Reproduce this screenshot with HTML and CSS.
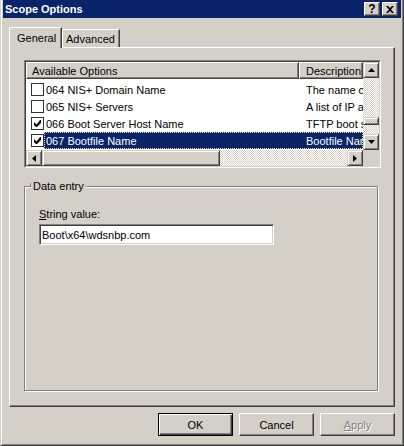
FILE: index.html
```html
<!DOCTYPE html>
<html lang="en">
<head>
    <meta charset="UTF-8">
    <title>Scope Options</title>
    <link rel="stylesheet" href="styles.css">
</head>
<body>

<div class="window">
    <div class="titlebar">
        <span class="title">Scope Options</span>
        <span class="cap-btn help">?</span>
        <span class="cap-btn">
            <svg width="8" height="7" viewBox="0 0 8 7"><path d="M0 0h2l2 2 2-2h2L5 3.5 8 7H6L4 5 2 7H0l3-3.5z" fill="#000"/></svg>
        </span>
    </div>

    <div class="dialog">
        <div class="tabs">
            <div class="tab active">General</div>
            <div class="tab">Advanced</div>
        </div>

        <div class="panel">
            <!-- lista de opções -->
            <div class="listview">
                <div class="lv-inner">
                    <div class="lv-main">
                        <div class="lv-head">
                            <div class="hcell name">Available Options</div>
                            <div class="hcell desc">Description</div>
                        </div>
                        <div class="lv-rows">
                            <div class="row">
                                <span class="cb"></span>
                                <div class="item"><span class="nm">064 NIS+ Domain Name</span><span class="ds">The name of the NIS+ domain</span></div>
                            </div>
                            <div class="row">
                                <span class="cb"></span>
                                <div class="item"><span class="nm">065 NIS+ Servers</span><span class="ds">A list of IP addresses</span></div>
                            </div>
                            <div class="row">
                                <span class="cb checked"><svg width="7" height="7" viewBox="0 0 7 7"><path d="M6 0h1v3L3 7H2L0 5V2l2.5 2.5z" fill="#000"/></svg></span>
                                <div class="item"><span class="nm">066 Boot Server Host Name</span><span class="ds">TFTP boot server host name</span></div>
                            </div>
                            <div class="row sel">
                                <span class="cb checked"><svg width="7" height="7" viewBox="0 0 7 7"><path d="M6 0h1v3L3 7H2L0 5V2l2.5 2.5z" fill="#000"/></svg></span>
                                <div class="item"><span class="nm">067 Bootfile Name</span><span class="ds">Bootfile Name</span></div>
                            </div>
                        </div>
                    </div>

                    <div class="vscroll">
                        <span class="sb-btn"><svg width="7" height="4" viewBox="0 0 7 4"><path d="M3.5 0L7 4H0z" fill="#000"/></svg></span>
                        <span class="thumb-v"></span>
                        <span class="sb-btn down"><svg width="7" height="4" viewBox="0 0 7 4"><path d="M0 0h7L3.5 4z" fill="#000"/></svg></span>
                    </div>

                    <div class="hscroll">
                        <span class="sb-btn"><svg width="4" height="7" viewBox="0 0 4 7"><path d="M0 3.5L4 0v7z" fill="#000"/></svg></span>
                        <span class="thumb-h"></span>
                        <span class="sb-btn right"><svg width="4" height="7" viewBox="0 0 4 7"><path d="M0 0l4 3.5L0 7z" fill="#000"/></svg></span>
                    </div>
                    <div class="corner"></div>
                </div>
            </div>

            <!-- entrada de dados -->
            <div class="group">
                <span class="group-title">Data entry</span>
                <div class="field-label"><u>S</u>tring value:</div>
                <input class="text-input" type="text" value="Boot\x64\wdsnbp.com">
            </div>
        </div>

        <div class="buttons">
            <button class="btn default">OK</button>
            <button class="btn">Cancel</button>
            <button class="btn disabled"><u>A</u>pply</button>
        </div>
    </div>
</div>

</body>
</html>
```

FILE: styles.css
```css
* {
    box-sizing: border-box;
}

body {
    margin: 0;
    font-family: "Liberation Sans", Arial, sans-serif;
    font-size: 11px;
    color: #000;
    background-color: #d4d0c8;
}

.window {
    width: 404px;
    height: 446px;
    background-color: #d4d0c8;
    border-left: 1px solid #d4d0c8;
    border-right: 1px solid #404040;
    border-bottom: 1px solid #404040;
    box-shadow: inset 1px 0 0 #fff, inset -1px -1px 0 #808080;
    padding: 0 2px 2px;
    display: flex;
    flex-direction: column;
}

.titlebar {
    height: 18px;
    background-color: #0a246a;
    color: #fff;
    font-weight: bold;
    display: flex;
    align-items: center;
    gap: 2px;
    padding: 0 3px 0 2px;
}

.title {
    flex: 1;
}

.cap-btn {
    width: 16px;
    height: 14px;
    background-color: #d4d0c8;
    border: 1px solid;
    border-color: #fff #404040 #404040 #fff;
    box-shadow: inset -1px -1px 0 #808080;
    color: #000;
    display: flex;
    align-items: center;
    justify-content: center;
    line-height: 1;
}

.cap-btn.help {
    font-size: 12px;
}

.dialog {
    flex: 1;
    padding: 9px 6px 0;
}

/* abas */
.tabs {
    display: flex;
    align-items: flex-end;
    height: 20px;
}

.tab {
    height: 18px;
    background-color: #d4d0c8;
    border: 1px solid;
    border-bottom: none;
    border-color: #fff #404040 #404040 #fff;
    border-top-left-radius: 2px;
    box-shadow: inset -1px 0 0 #808080;
    display: flex;
    align-items: center;
    padding: 1px 0 0 3px;
    width: 58px;
}

.tab.active {
    width: 53px;
    height: 21px;
    margin-bottom: -1px;
    padding: 0 0 0 7px;
    position: relative;
    z-index: 1;
}

.panel {
    width: 386px;
    height: 360px;
    border: 1px solid;
    border-color: #fff #404040 #404040 #fff;
    box-shadow: inset -1px -1px 0 #808080;
    padding: 12px 0 0 14px;
}

/* listview */
.listview {
    width: 357px;
    height: 108px;
    border: 1px solid;
    border-color: #808080 #fff #fff #808080;
}

.lv-inner {
    height: 100%;
    border: 1px solid;
    border-color: #404040 #d4d0c8 #d4d0c8 #404040;
    background-color: #fff;
    display: grid;
    grid-template-columns: 337px 16px;
    grid-template-rows: 88px 16px;
}

.lv-main {
    overflow: hidden;
}

.lv-head {
    display: flex;
    height: 17px;
}

.hcell {
    background-color: #d4d0c8;
    border: 1px solid;
    border-color: #fff #404040 #404040 #fff;
    box-shadow: inset -1px -1px 0 #808080;
    display: flex;
    align-items: center;
    white-space: nowrap;
    overflow: hidden;
}

.hcell.name {
    width: 273px;
    padding-left: 5px;
}

.hcell.desc {
    width: 64px;
    padding-left: 6px;
}

.lv-rows {
    padding-top: 2px;
}

.row {
    display: flex;
    align-items: center;
    height: 17px;
}

.cb {
    width: 13px;
    height: 13px;
    margin-left: 5px;
    border: 1px solid #333;
    background-color: #fff;
    display: flex;
    align-items: center;
    justify-content: center;
    flex-shrink: 0;
}

.item {
    display: flex;
    align-items: center;
    height: 100%;
    white-space: nowrap;
}

.item .nm {
    width: 255px;
    padding-left: 2px;
}

.item .ds {
    width: 64px;
    padding-left: 7px;
    overflow: hidden;
}

.row.sel .item {
    background-color: #0a246a;
    color: #fff;
    outline: 1px dotted #f5db95;
    outline-offset: -1px;
}

/* barras de rolagem */
.vscroll,
.hscroll {
    display: flex;
    background-color: #d4d0c8;
    background-image: conic-gradient(#fff 25%, #d4d0c8 0 50%, #fff 0 75%, #d4d0c8 0);
    background-size: 2px 2px;
}

.vscroll {
    flex-direction: column;
}

.sb-btn,
.thumb-v,
.thumb-h {
    background-color: #d4d0c8;
    border: 1px solid;
    border-color: #d4d0c8 #404040 #404040 #d4d0c8;
    box-shadow: inset 1px 1px 0 #fff, inset -1px -1px 0 #808080;
}

.sb-btn {
    width: 16px;
    height: 16px;
    display: flex;
    align-items: center;
    justify-content: center;
    flex-shrink: 0;
}

.sb-btn.down {
    margin-top: auto;
}

.sb-btn.right {
    margin-left: auto;
}

.thumb-v {
    width: 16px;
    height: 8px;
    margin-top: 39px;
}

.thumb-h {
    width: 178px;
    height: 16px;
}

.corner {
    background-color: #d4d0c8;
}

/* grupo */
.group {
    width: 354px;
    height: 205px;
    margin-top: 18px;
    border: 1px solid #808080;
    box-shadow: 1px 1px 0 #fff, inset 1px 1px 0 #fff;
    padding-left: 14px;
}

.group-title {
    display: inline-block;
    position: relative;
    line-height: 13px;
    margin: -7px 0 0 -8px;
    padding: 0 2px;
    background-color: #d4d0c8;
    vertical-align: top;
}

.group-title::before {
    content: "";
    position: absolute;
    left: -1px;
    top: 3px;
    width: 1px;
    height: 4px;
    background-color: #808080;
}

.field-label {
    margin-top: 9px;
    line-height: 13px;
}

.text-input {
    display: block;
    width: 235px;
    height: 21px;
    margin-top: 3px;
    padding: 0 2px;
    font-family: inherit;
    font-size: 11px;
    color: #000;
    background-color: #fff;
    border: 1px solid;
    border-color: #808080 #fff #fff #808080;
    box-shadow: inset 1px 1px 0 #404040, inset -1px -1px 0 #d4d0c8;
    outline: none;
}

/* botões */
.buttons {
    display: flex;
    justify-content: flex-end;
    gap: 6px;
    margin-top: 6px;
}

.btn {
    width: 75px;
    height: 23px;
    padding: 0;
    font-family: inherit;
    font-size: 11px;
    color: #000;
    background-color: #d4d0c8;
    border: 1px solid;
    border-color: #fff #404040 #404040 #fff;
    box-shadow: inset -1px -1px 0 #808080;
}

.btn.default {
    border-color: #000;
    box-shadow: inset 1px 1px 0 #fff, inset -1px -1px 0 #404040, inset -2px -2px 0 #808080;
}

.btn.disabled {
    color: #808080;
    text-shadow: 1px 1px 0 #fff;
}
```
